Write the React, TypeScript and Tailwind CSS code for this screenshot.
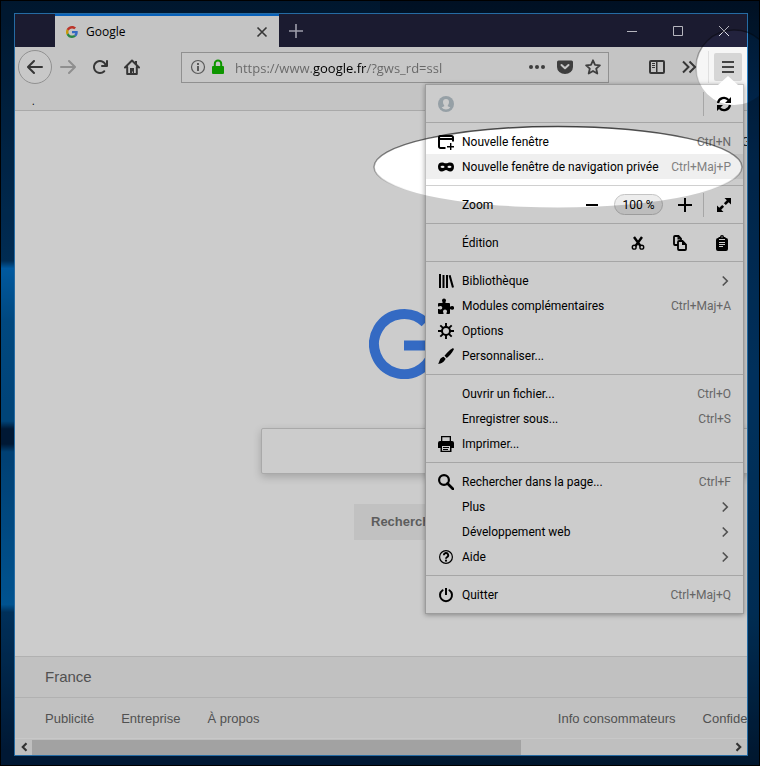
import type { ReactNode } from "react";

type IconProps = {
  children: ReactNode;
  size?: number;
  className?: string;
};

const Icon = ({ children, size = 16, className = "" }: IconProps) => {
  return (
    <svg
      width={size}
      height={size}
      viewBox="0 0 16 16"
      fill="currentColor"
      className={`shrink-0 ${className}`}
      aria-hidden="true"
    >
      {children}
    </svg>
  );
};

const BackPath = () => (
  <path d="M15 7H3.414l4.293-4.293a1 1 0 0 0-1.414-1.414l-6 6a1 1 0 0 0 0 1.414l6 6a1 1 0 0 0 1.414-1.414L3.414 9H15a1 1 0 0 0 0-2z" />
);

const GoogleFavicon = () => {
  return (
    <svg width="12" height="12" viewBox="0 0 48 48" aria-hidden="true">
      <path
        fill="#EA4335"
        d="M24 9.5c3.54 0 6.71 1.22 9.21 3.6l6.85-6.85C35.9 2.38 30.47 0 24 0 14.62 0 6.51 5.38 2.56 13.22l7.98 6.19C12.43 13.72 17.74 9.5 24 9.5z"
      />
      <path
        fill="#4285F4"
        d="M46.98 24.55c0-1.57-.15-3.09-.38-4.55H24v9.02h12.94c-.58 2.96-2.26 5.48-4.78 7.18l7.73 6c4.51-4.18 7.09-10.36 7.09-17.65z"
      />
      <path
        fill="#FBBC05"
        d="M10.53 28.59A14.5 14.5 0 0 1 9.77 24c0-1.6.27-3.14.76-4.59l-7.98-6.19A23.9 23.9 0 0 0 0 24c0 3.88.92 7.54 2.56 10.78l7.97-6.19z"
      />
      <path
        fill="#34A853"
        d="M24 48c6.48 0 11.93-2.13 15.89-5.81l-7.73-6c-2.15 1.45-4.92 2.3-8.16 2.3-6.26 0-11.57-4.22-13.47-9.91l-7.98 6.19C6.51 42.62 14.62 48 24 48z"
      />
    </svg>
  );
};

const TitleBar = () => {
  return (
    <div className="flex h-[33px] bg-[#22223d] pl-10 text-[#e4e4ee]">
      <div className="flex w-56 items-center border-t-2 border-[#0a7ae8] bg-[#f6f6f6] pr-2 pl-[11px] text-black">
        <GoogleFavicon />
        <span className="ml-2 flex-1 text-[12px]">Google</span>
        <button aria-label="Fermer l'onglet" className="flex size-[18px] items-center justify-center text-[#444]">
          <Icon size={12}>
            <path d="M2 2l12 12M14 2L2 14" stroke="currentColor" strokeWidth="2.2" />
          </Icon>
        </button>
      </div>
      <button aria-label="Nouvel onglet" className="flex w-[34px] items-center justify-center text-[#c6c6d6]">
        <Icon>
          <path d="M8 1v14M1 8h14" stroke="currentColor" strokeWidth="1.6" />
        </Icon>
      </button>
      <div className="ml-auto flex">
        <button aria-label="Réduire" className="flex w-[46px] items-center justify-center">
          <Icon>
            <path d="M3 8h10v1H3z" />
          </Icon>
        </button>
        <button aria-label="Agrandir" className="flex w-[46px] items-center justify-center">
          <Icon>
            <path d="M3.500 3.500h9v9h-9z" fill="none" stroke="currentColor" />
          </Icon>
        </button>
        <button aria-label="Fermer" className="flex w-[46px] items-center justify-center">
          <Icon>
            <path d="M3 3l10 10M13 3L3 13" stroke="currentColor" />
          </Icon>
        </button>
      </div>
    </div>
  );
};

const UrlBar = () => {
  return (
    <div className="mr-8 ml-[33px] flex h-[31px] min-w-0 flex-1 items-center border border-[#b5b5b5] bg-[#f9f9f9] pr-px pl-2 text-[#4e4e4e]">
      <Icon className="text-[#707070]">
        <circle cx="8" cy="8" r="6.500" fill="none" stroke="currentColor" strokeWidth="1.200" />
        <path d="M7 4h2v2H7zM7 7h2v5H7z" />
      </Icon>
      <Icon className="ml-1 text-[#12bc00]">
        <path d="M3 7h10a1 1 0 0 1 1 1v6a1 1 0 0 1-1 1H3a1 1 0 0 1-1-1V8a1 1 0 0 1 1-1z" />
        <path d="M4.800 8V4.800a3.200 3.200 0 0 1 6.400 0V8" fill="none" stroke="currentColor" strokeWidth="2" />
      </Icon>
      <input
        type="text"
        aria-label="Adresse"
        readOnly
        value="https://www.google.fr/?gws_rd=ssl"
        className="ml-[9px] h-full min-w-0 flex-1 bg-[linear-gradient(90deg,#808080_78px,#000_78px,#000_132px,#808080_132px)] bg-clip-text pt-[2px] text-[13px] text-transparent outline-none"
      />
      <button aria-label="Actions pour la page" className="flex w-7 justify-center">
        <Icon>
          <circle cx="2" cy="8" r="2" />
          <circle cx="8" cy="8" r="2" />
          <circle cx="14" cy="8" r="2" />
        </Icon>
      </button>
      <button aria-label="Enregistrer dans Pocket" className="flex w-7 justify-center">
        <Icon>
          <path d="M1.500 1.500h13A1.500 1.500 0 0 1 16 3v5A8 7 0 0 1 0 8V3a1.500 1.500 0 0 1 1.500-1.500z" />
          <path
            d="M4.500 6l3.500 3.300L11.500 6"
            fill="none"
            stroke="#f9f9f9"
            strokeWidth="2"
            strokeLinecap="round"
            strokeLinejoin="round"
          />
        </Icon>
      </button>
      <button aria-label="Marquer cette page" className="flex w-7 justify-center">
        <Icon>
          <path
            d="M8 1.300l2 4.500 4.900.5-3.700 3.300 1.100 4.900L8 12l-4.300 2.500 1.100-4.900L1.100 6.300 6 5.800z"
            fill="none"
            stroke="currentColor"
            strokeWidth="1.800"
            strokeLinejoin="round"
          />
        </Icon>
      </button>
    </div>
  );
};

const Separator = () => <div role="separator" className="border-t border-[#d0d0d0]" />;

const MenuGroup = ({ children }: { children: ReactNode }) => {
  return <div className="py-[6px]">{children}</div>;
};

type MenuItemProps = {
  label: string;
  icon?: ReactNode;
  shortcut?: string;
  arrow?: boolean;
  active?: boolean;
};

const MenuItem = ({ label, icon, shortcut, arrow, active }: MenuItemProps) => {
  return (
    <button
      className={`flex h-[25px] w-full items-center gap-2 px-[12px] text-left whitespace-nowrap ${
        active ? "bg-[#efefef]" : ""
      }`}
    >
      <span className="size-4 shrink-0">{icon}</span>
      <span className="flex-1">{label}</span>
      {shortcut && <span className="text-[#808080]">{shortcut}</span>}
      {arrow && (
        <Icon size={12} className="text-[#666]">
          <path d="M5 2l6 6-6 6" fill="none" stroke="currentColor" strokeWidth="2.200" />
        </Icon>
      )}
    </button>
  );
};

const MainMenu = () => {
  return (
    <div className="absolute top-[37px] right-[3px] z-10 w-[319px] border border-[#c4c4c4] bg-white font-[Roboto,'Open_Sans',sans-serif] text-[12px] text-black shadow-[0_1px_5px_rgba(0,0,0,0.35)]">
      <svg
        width="20"
        height="9"
        viewBox="0 0 20 9"
        className="absolute -top-[9px] right-[5px]"
        aria-hidden="true"
      >
        <path d="M0 9L10 0l10 9z" fill="#fff" />
      </svg>

      <div className="flex h-[37px] items-center pl-[12px]">
        <button aria-label="Compte" className="text-[#bcc8d0]">
          <Icon>
            <circle cx="8" cy="8" r="8" />
            <path
              d="M8 3a3 3 0 0 1 3 3c0 1.600-.6 2.500-1.200 3.200v1l2.600 1.400A6 6 0 0 1 8 13.600a6 6 0 0 1-4.400-2l2.600-1.400v-1C5.600 8.500 5 7.600 5 6a3 3 0 0 1 3-3z"
              fill="#fff"
            />
          </Icon>
        </button>
        <button
          aria-label="Synchroniser"
          className="ml-auto flex h-6 w-10 items-center justify-center border-l border-[#d0d0d0]"
        >
          <Icon>
            <path
              d="M2 7a6 6 0 0 1 10.500-3M14 9a6 6 0 0 1-10.500 3"
              fill="none"
              stroke="currentColor"
              strokeWidth="2.200"
            />
            <path d="M15 1v6H9zM1 15V9h6z" />
          </Icon>
        </button>
      </div>

      <Separator />
      <MenuGroup>
        <MenuItem
          label="Nouvelle fenêtre"
          shortcut="Ctrl+N"
          icon={
            <Icon>
              <path
                d="M7.500 14H2.500A1.500 1.500 0 0 1 1 12.500v-9A1.500 1.500 0 0 1 2.500 2h11A1.500 1.500 0 0 1 15 3.500v4"
                fill="none"
                stroke="currentColor"
                strokeWidth="2"
              />
              <path d="M1 4h14v2H1zM12 9h1.400v3H16v1.400h-2.600V16H12v-2.600H9V12h3z" />
            </Icon>
          }
        />
        <MenuItem
          label="Nouvelle fenêtre de navigation privée"
          shortcut="Ctrl+Maj+P"
          active
          icon={
            <Icon>
              <path
                fillRule="evenodd"
                d="M4 3.500c1.600 0 2.600.8 4 .8s2.400-.8 4-.8c2.600 0 4 1.600 4 4.200 0 2.900-1.500 4.800-3.800 4.800-2 0-2.800-1.600-4.200-1.600s-2.200 1.600-4.200 1.600C1.500 12.500 0 10.600 0 7.700 0 5.100 1.400 3.500 4 3.500zm.6 3.200c-1.100 0-1.800.5-2.200 1.300.5.700 1.200 1.100 2.200 1.100S6.300 8.700 6.700 8c-.5-.8-1.100-1.300-2.100-1.300zm6.800 0c-1 0-1.600.5-2.100 1.300.4.700 1.100 1.100 2.100 1.100s1.700-.4 2.200-1.100c-.4-.8-1.100-1.300-2.200-1.300z"
              />
            </Icon>
          }
        />
      </MenuGroup>

      <Separator />
      <div className="flex h-[37px] items-center pl-9">
        <span className="flex-1">Zoom</span>
        <div className="flex items-center gap-1">
          <button aria-label="Zoom arrière" className="flex w-9 justify-center">
            <Icon>
              <path d="M2 7h12v2H2z" />
            </Icon>
          </button>
          <button className="flex h-[21px] w-[49px] items-center justify-center rounded-full border border-[#c4c4c4] bg-[#ededed] whitespace-nowrap">
            100 %
          </button>
          <button aria-label="Zoom avant" className="flex w-9 justify-center">
            <Icon>
              <path d="M7 1h2v6h6v2H9v6H7V9H1V7h6z" />
            </Icon>
          </button>
        </div>
        <button
          aria-label="Plein écran"
          className="flex h-6 w-10 items-center justify-center border-l border-[#d0d0d0]"
        >
          <Icon>
            <path d="M8.500 1H15v6.500l-2.300-2.300-2.900 2.900-1.900-1.900 2.900-2.900zM7.500 15H1V8.500l2.300 2.300 2.900-2.900 1.900 1.900-2.900 2.900z" />
          </Icon>
        </button>
      </div>

      <Separator />
      <div className="flex h-[37px] items-center pl-9">
        <span className="flex-1">Édition</span>
        <button aria-label="Couper" className="flex w-[42px] justify-center">
          <Icon>
            <path
              d="M4 2l6.500 9M12 2L5.500 11"
              fill="none"
              stroke="currentColor"
              strokeWidth="2.400"
            />
            <circle cx="4.200" cy="12.200" r="1.900" fill="none" stroke="currentColor" strokeWidth="1.400" />
            <circle cx="11.800" cy="12.200" r="1.900" fill="none" stroke="currentColor" strokeWidth="1.400" />
          </Icon>
        </button>
        <button aria-label="Copier" className="flex w-[42px] justify-center">
          <Icon>
            <path
              d="M5.500 10H3a1 1 0 0 1-1-1V2a1 1 0 0 1 1-1h3.500L9 3.500V5M7 6h3.500L14 9.500V14a1 1 0 0 1-1 1H7a1 1 0 0 1-1-1V7a1 1 0 0 1 1-1z"
              fill="none"
              stroke="currentColor"
              strokeWidth="1.800"
            />
            <path d="M5.500 1v3.500H9zM10 6v4h4z" />
          </Icon>
        </button>
        <button aria-label="Coller" className="flex w-[42px] justify-center">
          <Icon>
            <path
              fillRule="evenodd"
              d="M5 2h1a2 2 0 0 1 4 0h1l1 1a2 2 0 0 1 2 2v9a2 2 0 0 1-2 2H4a2 2 0 0 1-2-2V5a2 2 0 0 1 2-2zm0 2v1h6V4zm0 3v1h6V7zm0 2v1h6V9zm0 2v1h4v-1zM7.400 1.500v1h1.200v-1z"
            />
          </Icon>
        </button>
      </div>

      <Separator />
      <MenuGroup>
        <MenuItem
          label="Bibliothèque"
          arrow
          icon={
            <Icon>
              <path d="M1 1h2v14H1zM4.500 2h2v13h-2zM8 2h2v13H8zM10.600 2.600l2-.6L16 14.200l-2 .6z" />
            </Icon>
          }
        />
        <MenuItem
          label="Modules complémentaires"
          shortcut="Ctrl+Maj+A"
          icon={
            <Icon>
              <path d="M4.500 5V3.800C4.100 3.400 4 3 4 2.500a2 2 0 0 1 4 0c0 .5-.1.900-.5 1.300V5H11a1 1 0 0 1 1 1v2.500h1c.4-.4.700-.5 1.200-.5a1.900 1.900 0 0 1 0 3.800c-.5 0-.8-.1-1.200-.5h-1V15a1 1 0 0 1-1 1H8.500v-1.300c.4-.4.500-.7.500-1.200a2 2 0 0 0-4 0c0 .5.100.8.5 1.200V16H1a1 1 0 0 1-1-1v-4h1.200c.4.400.8.500 1.300.5a1.800 1.800 0 0 0 0-3.600c-.5 0-.9.100-1.300.5H0V6a1 1 0 0 1 1-1z" />
            </Icon>
          }
        />
        <MenuItem
          label="Options"
          icon={
            <Icon>
              <circle cx="8" cy="8" r="4" fill="none" stroke="currentColor" strokeWidth="2" />
              <path
                d="M8 0v4M8 12v4M0 8h4M12 8h4M2.300 2.300l2.900 2.900M10.800 10.800l2.900 2.900M2.300 13.700l2.900-2.900M10.800 5.200l2.900-2.900"
                stroke="currentColor"
                strokeWidth="1.900"
              />
            </Icon>
          }
        />
        <MenuItem
          label="Personnaliser..."
          icon={
            <Icon>
              <path d="M14.600.3a1 1 0 0 1 1.200 1.300C14 5 11.500 7.800 8.800 10L6.500 7.700C8.700 5 11.300 2.300 14.600.3zM5.600 8.700l2 2C7 12 6.300 13.200 4.800 14.200 3.400 15.200 1.400 15.800 0 15.800c1-1.200 1.200-2.200 1.800-3.800.6-1.700 2-2.900 3.800-3.300z" />
            </Icon>
          }
        />
      </MenuGroup>

      <Separator />
      <MenuGroup>
        <MenuItem label="Ouvrir un fichier..." shortcut="Ctrl+O" />
        <MenuItem label="Enregistrer sous..." shortcut="Ctrl+S" />
        <MenuItem
          label="Imprimer..."
          icon={
            <Icon>
              <path
                fillRule="evenodd"
                d="M3 0h10v5h1a2 2 0 0 1 2 2v5h-2.500v4h-11v-4H0V7a2 2 0 0 1 2-2h1zm1.300 1.300V5h7.400V1.300zM4 10v4.800h8V10zm1 1h6v1H5zm0 2h5v1H5z"
              />
            </Icon>
          }
        />
      </MenuGroup>

      <Separator />
      <MenuGroup>
        <MenuItem
          label="Rechercher dans la page..."
          shortcut="Ctrl+F"
          icon={
            <Icon>
              <circle cx="6" cy="6" r="4.900" fill="none" stroke="currentColor" strokeWidth="2.200" />
              <path d="M9.500 9.500l5.500 5.500" stroke="currentColor" strokeWidth="2.600" strokeLinecap="round" />
            </Icon>
          }
        />
        <MenuItem label="Plus" arrow />
        <MenuItem label="Développement web" arrow />
        <MenuItem
          label="Aide"
          arrow
          icon={
            <Icon>
              <circle cx="8" cy="8" r="6.400" fill="none" stroke="currentColor" strokeWidth="1.200" />
              <path
                d="M5.800 6.200a2.200 2.200 0 1 1 3.200 2c-.7.400-1 .7-1 1.600"
                fill="none"
                stroke="currentColor"
                strokeWidth="1.900"
              />
              <circle cx="8" cy="11.700" r="1.100" />
            </Icon>
          }
        />
      </MenuGroup>

      <Separator />
      <MenuGroup>
        <MenuItem
          label="Quitter"
          shortcut="Ctrl+Maj+Q"
          icon={
            <Icon>
              <path
                d="M4.600 3.200a6 6 0 1 0 6.800 0"
                fill="none"
                stroke="currentColor"
                strokeWidth="2"
                strokeLinecap="round"
              />
              <path d="M7 1h2v7H7z" />
            </Icon>
          }
        />
      </MenuGroup>
    </div>
  );
};

const Toolbar = () => {
  return (
    <div className="relative flex h-10 items-center bg-[#f6f6f6] pr-[5px] pl-[3px] text-[#444]">
      <button
        aria-label="Page précédente"
        className="flex size-[34px] shrink-0 items-center justify-center rounded-full border border-[#b5b5b5] bg-[#fafafa]"
      >
        <Icon>
          <BackPath />
        </Icon>
      </button>
      <button aria-label="Page suivante" className="flex w-8 justify-center text-[#b3b3b3]">
        <Icon className="rotate-180">
          <BackPath />
        </Icon>
      </button>
      <button aria-label="Actualiser" className="flex w-8 justify-center">
        <Icon>
          <path d="M15 1a1 1 0 0 0-1 1v2.418A6.995 6.995 0 1 0 8 15a6.954 6.954 0 0 0 4.950-2.050 1 1 0 0 0-1.414-1.414A5.019 5.019 0 1 1 12.549 6H10a1 1 0 0 0 0 2h5a1 1 0 0 0 1-1V2a1 1 0 0 0-1-1z" />
        </Icon>
      </button>
      <button aria-label="Accueil" className="flex w-8 justify-center">
        <Icon>
          <path
            d="M1 8.500L8 1.500l7 7M3.200 8v7h9.600V8"
            fill="none"
            stroke="currentColor"
            strokeWidth="2"
            strokeLinecap="round"
            strokeLinejoin="round"
          />
          <path d="M6 9h4v6H8.800v-2.500H8V15H6zM11 2h2v4l-2-2z" />
        </Icon>
      </button>

      <UrlBar />

      <button aria-label="Panneaux latéraux" className="flex w-8 justify-center">
        <Icon>
          <path
            fillRule="evenodd"
            d="M2 1h12a2 2 0 0 1 2 2v10a2 2 0 0 1-2 2H2a2 2 0 0 1-2-2V3a2 2 0 0 1 2-2zm0 2v10h5V3zm6.500 0v10H14V3z"
          />
          <path d="M3 4h3v1H3zM3 6h3v1H3zM3 8h3v1H3z" />
        </Icon>
      </button>
      <button aria-label="Autres outils" className="flex w-8 justify-center">
        <Icon>
          <path
            d="M2 2.500L7.500 8 2 13.500M8.500 2.500L14 8l-5.500 5.500"
            fill="none"
            stroke="currentColor"
            strokeWidth="2"
          />
        </Icon>
      </button>
      <div className="ml-[3px] h-8 border-l border-[#e0e0e0]" />
      <button
        aria-label="Ouvrir le menu"
        className="ml-[5px] flex size-7 items-center justify-center rounded-xs bg-[#d6d6d6]"
      >
        <Icon>
          <path d="M2 2h12v2H2zM2 7h12v2H2zM2 12h12v2H2z" />
        </Icon>
      </button>

      <MainMenu />
    </div>
  );
};

const GooglePage = () => {
  return (
    <div className="overflow-hidden bg-white font-['Liberation_Sans',Arial,sans-serif]">
      <div className="flex h-[62px] items-center justify-end">
        <a href="#gmail" className="-mr-[28px] text-[13px] text-[#333]">
          Gmail
        </a>
      </div>
      <div className="flex w-[1043px] flex-col items-center pt-[136px] pb-[116px]">
        <div className="w-[336px]">
          <svg width="70" height="70" viewBox="0 0 70 70" role="img" aria-label="Google">
            <path
              d="M56.200 13.800A30 30 0 1 0 65 36.500H35"
              fill="none"
              stroke="#4285f4"
              strokeWidth="10"
            />
          </svg>
        </div>
        <input
          type="text"
          aria-label="Rechercher"
          className="mt-[49px] h-[46px] w-[552px] rounded-xs border border-[#d4d4d4] bg-white px-4 shadow-[0_3px_8px_rgba(0,0,0,0.2)] outline-none"
        />
        <div className="mt-[30px] flex w-[365px]">
          <button className="h-9 bg-[#f2f2f2] px-[17px] text-[13px] font-bold text-[#757575]">
            Recherche Google
          </button>
        </div>
      </div>
      <footer className="bg-[#f2f2f2] text-[#666]">
        <div className="flex h-[41px] items-center border-t border-[#dedede] px-[30px] text-[15px]">France</div>
        <div className="flex h-[41px] items-center border-t border-[#dedede] pt-[2px] pl-[30px] text-[13px] whitespace-nowrap">
          <nav className="flex gap-[27px]">
            <a href="#publicite">Publicité</a>
            <a href="#entreprise">Entreprise</a>
            <a href="#apropos">À propos</a>
          </nav>
          <nav className="-mr-[38px] ml-auto flex gap-[27px]">
            <a href="#info">Info consommateurs</a>
            <a href="#confidentialite">Confidentialité</a>
          </nav>
        </div>
      </footer>
    </div>
  );
};

const Scrollbar = () => {
  return (
    <div className="flex h-[17px] items-center border-t border-[#fafafa] bg-[#efefef] text-[#404040]">
      <button aria-label="Défiler à gauche" className="flex w-[17px] justify-center">
        <Icon size={10}>
          <path d="M12 2L6 8l6 6" fill="none" stroke="currentColor" strokeWidth="3.400" />
        </Icon>
      </button>
      <div className="h-[15px] flex-1">
        <div className="h-full w-[70%] bg-[#cbcbcb]" />
      </div>
      <button aria-label="Défiler à droite" className="flex w-[17px] justify-center">
        <Icon size={10}>
          <path d="M4 2l6 6-6 6" fill="none" stroke="currentColor" strokeWidth="3.400" />
        </Icon>
      </button>
    </div>
  );
};

// Dims everything except the menu button and the two "new window" entries
const Spotlight = () => {
  return (
    <svg
      width="760"
      height="766"
      viewBox="0 0 760 766"
      className="pointer-events-none absolute -top-px -right-px z-20 overflow-visible"
      aria-hidden="true"
    >
      <defs>
        <linearGradient id="edge" x1="0" y1="0" x2="0" y2="1">
          <stop offset="0" stopColor="#000" stopOpacity="0.700" />
          <stop offset="0.500" stopColor="#000" stopOpacity="0.350" />
          <stop offset="0.800" stopColor="#000" stopOpacity="0" />
        </linearGradient>
      </defs>
      <path
        fillRule="evenodd"
        fill="#000"
        fillOpacity="0.200"
        d="M-4000 0H760V4000H-4000zM374 167a184 40.500 0 1 0 368 0a184 40.500 0 1 0-368 0zM696 67.500a38 37.500 0 1 0 76 0a38 37.500 0 1 0-76 0z"
      />
      <ellipse cx="558" cy="167" rx="184" ry="40.500" fill="none" stroke="url(#edge)" strokeWidth="1.500" />
      <ellipse
        cx="734"
        cy="67.500"
        rx="38"
        ry="37.500"
        fill="none"
        stroke="url(#edge)"
        strokeWidth="1.500"
        strokeOpacity="0.600"
      />
    </svg>
  );
};

export default function App() {
  return (
    <div className="relative min-h-screen overflow-hidden border border-black bg-[linear-gradient(#001d3a,#003768_34%,#0070c8_35%,#005a9f_42%,#005596_55%,#001f42_56%,#001f42_58%,#005090_59%,#0068b4_79%,#003c70_80%,#001f42_98%),linear-gradient(#00152c,#002c58_20%,#003d74_50%,#003868_80%,#001c3a)] bg-[length:50%_100%,50%_100%] bg-[position:left,right] bg-no-repeat pt-3 pr-[11px] pb-[9px] pl-[13px] font-['Open_Sans','Noto_Sans',sans-serif]">
      <div className="border border-[#2f86cc]">
        <TitleBar />
        <Toolbar />
        <div className="h-6 border-b border-[#d4d4d4] bg-[#f6f6f6] pl-[17px] text-[10px] leading-7 text-black">
          .
        </div>
        <GooglePage />
        <Scrollbar />
      </div>
      <Spotlight />
    </div>
  );
}
